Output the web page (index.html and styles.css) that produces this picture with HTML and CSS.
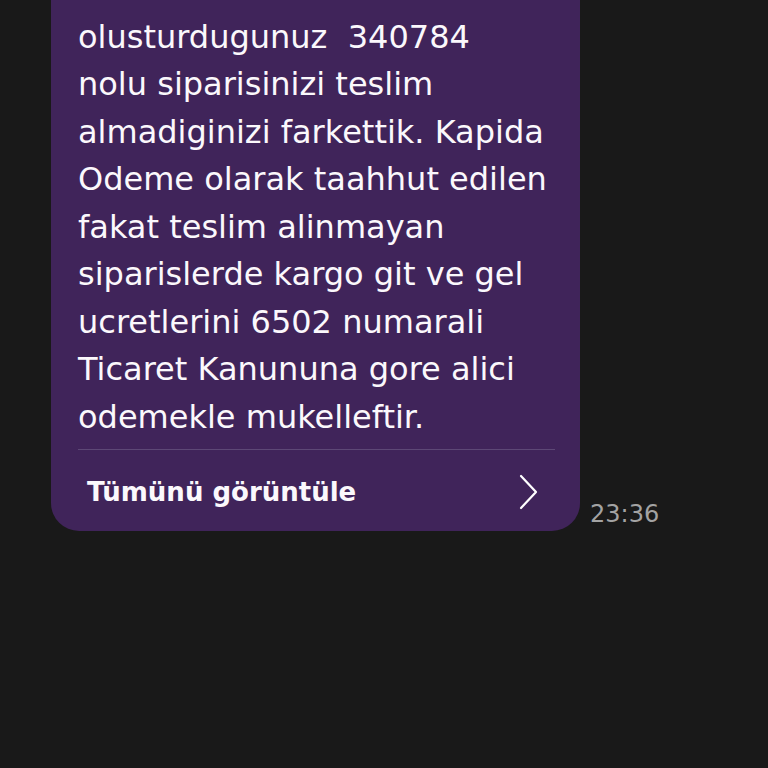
FILE: index.html
```html
<!DOCTYPE html>
<html lang="tr">
<head>
<meta charset="utf-8">
<link rel="stylesheet" href="styles.css">
</head>
<body>
<div class="chat">
  <div class="bubble">
    <p class="msg"><span class="ln">Odeme tarihinde olarak</span><span class="ln">olusturdugunuz&nbsp; 340784</span><span class="ln">nolu siparisinizi teslim</span><span class="ln">almadiginizi farkettik. Kapida</span><span class="ln">Odeme olarak taahhut edilen</span><span class="ln">fakat teslim alinmayan</span><span class="ln">siparislerde kargo git ve gel</span><span class="ln">ucretlerini 6502 numarali</span><span class="ln">Ticaret Kanununa gore alici</span><span class="ln">odemekle mukelleftir.</span></p>
    <div class="divider"></div>
    <div class="more">
      <span class="more-label">Tümünü görüntüle</span>
      <svg class="chev" width="22" height="36" viewBox="0 0 22 36"><path d="M3 2 L18 18 L3 34" fill="none" stroke="#ffffff" stroke-width="2.2" stroke-linecap="round" stroke-linejoin="round"/></svg>
    </div>
  </div>
  <span class="time">23:36</span>
</div>
</body>
</html>
```

FILE: styles.css
```css
html, body {
  margin: 0;
  padding: 0;
  background: #191919;
  height: 768px;
  overflow: hidden;
}
.chat {
  display: flex;
  align-items: flex-end;
  gap: 10px;
  padding-left: 51px;
  margin-top: -34px;
}
.bubble {
  width: 529px;
  background: #40245a;
  border-radius: 0 0 28px 28px;
  font-family: "DejaVu Sans", "Noto Sans", sans-serif;
  color: #fbf8fc;
}
.msg {
  margin: 0;
  padding: 0 20px 0 27px;
  font-size: 32px;
  line-height: 47.5px;
}
.ln {
  display: block;
  white-space: nowrap;
}
.divider {
  height: 1px;
  background: #5d4876;
  margin: 8px 25px 0 27px;
}
.more {
  display: flex;
  align-items: center;
  justify-content: space-between;
  height: 81px;
  padding: 2px 40px 0 36px;
  box-sizing: border-box;
}
.more-label {
  font-size: 26px;
  font-weight: 700;
}
.time {
  font-family: "DejaVu Sans", "Noto Sans", sans-serif;
  font-size: 24px;
  color: #a3a3a3;
  line-height: 28px;
  margin-bottom: 3px;
}
```
